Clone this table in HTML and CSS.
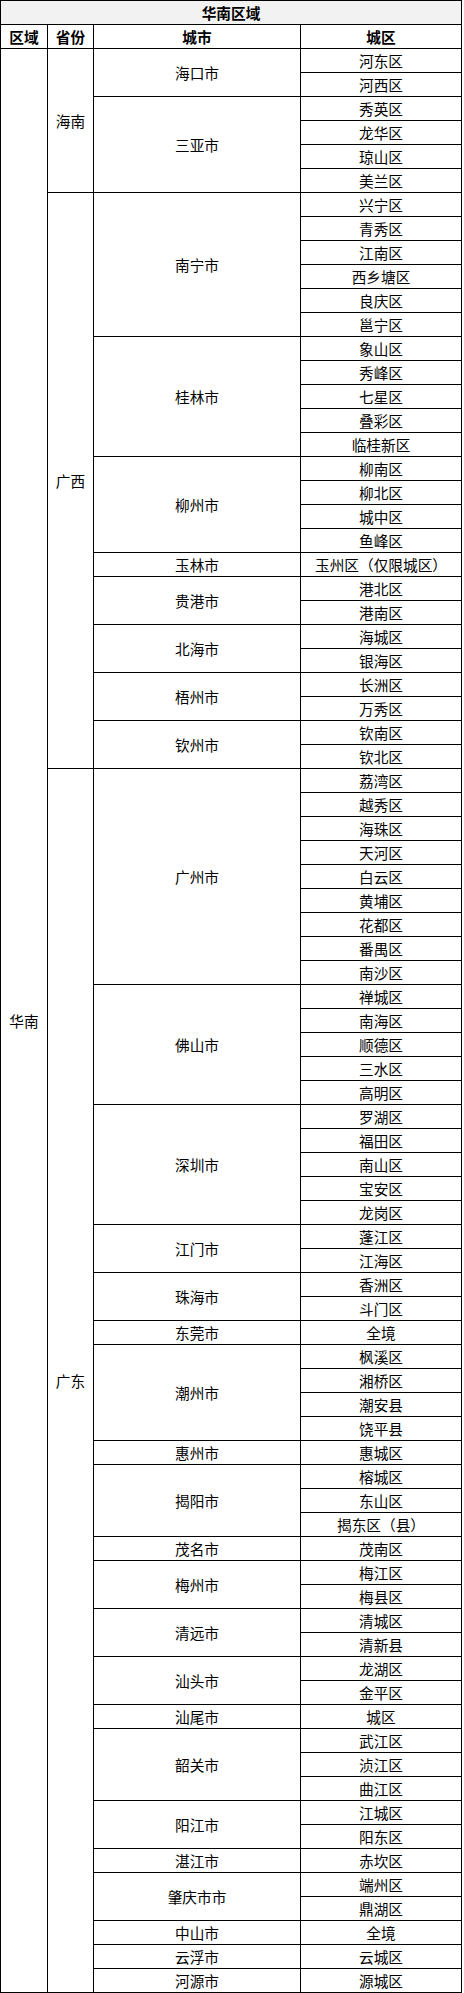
FILE: index.html
```html
<!DOCTYPE html>
<html lang="zh-CN">
<head>
<meta charset="utf-8">
<title>华南区域</title>
<link rel="stylesheet" href="styles.css">
</head>
<body>
<table class="region-table">
<colgroup><col class="c-region"><col class="c-prov"><col class="c-city"><col class="c-dist"></colgroup>
<thead>
<tr><th colspan="4" class="title">华南区域</th></tr>
<tr><th>区域</th><th>省份</th><th>城市</th><th>城区</th></tr>
</thead>
<tbody>
<tr><td rowspan="81">华南</td><td rowspan="6">海南</td><td rowspan="2">海口市</td><td>河东区</td></tr>
<tr><td>河西区</td></tr>
<tr><td rowspan="4">三亚市</td><td>秀英区</td></tr>
<tr><td>龙华区</td></tr>
<tr><td>琼山区</td></tr>
<tr><td>美兰区</td></tr>
<tr><td rowspan="24">广西</td><td rowspan="6">南宁市</td><td>兴宁区</td></tr>
<tr><td>青秀区</td></tr>
<tr><td>江南区</td></tr>
<tr><td>西乡塘区</td></tr>
<tr><td>良庆区</td></tr>
<tr><td>邕宁区</td></tr>
<tr><td rowspan="5">桂林市</td><td>象山区</td></tr>
<tr><td>秀峰区</td></tr>
<tr><td>七星区</td></tr>
<tr><td>叠彩区</td></tr>
<tr><td>临桂新区</td></tr>
<tr><td rowspan="4">柳州市</td><td>柳南区</td></tr>
<tr><td>柳北区</td></tr>
<tr><td>城中区</td></tr>
<tr><td>鱼峰区</td></tr>
<tr><td>玉林市</td><td>玉州区（仅限城区）</td></tr>
<tr><td rowspan="2">贵港市</td><td>港北区</td></tr>
<tr><td>港南区</td></tr>
<tr><td rowspan="2">北海市</td><td>海城区</td></tr>
<tr><td>银海区</td></tr>
<tr><td rowspan="2">梧州市</td><td>长洲区</td></tr>
<tr><td>万秀区</td></tr>
<tr><td rowspan="2">钦州市</td><td>钦南区</td></tr>
<tr><td>钦北区</td></tr>
<tr><td rowspan="51">广东</td><td rowspan="9">广州市</td><td>荔湾区</td></tr>
<tr><td>越秀区</td></tr>
<tr><td>海珠区</td></tr>
<tr><td>天河区</td></tr>
<tr><td>白云区</td></tr>
<tr><td>黄埔区</td></tr>
<tr><td>花都区</td></tr>
<tr><td>番禺区</td></tr>
<tr><td>南沙区</td></tr>
<tr><td rowspan="5">佛山市</td><td>禅城区</td></tr>
<tr><td>南海区</td></tr>
<tr><td>顺德区</td></tr>
<tr><td>三水区</td></tr>
<tr><td>高明区</td></tr>
<tr><td rowspan="5">深圳市</td><td>罗湖区</td></tr>
<tr><td>福田区</td></tr>
<tr><td>南山区</td></tr>
<tr><td>宝安区</td></tr>
<tr><td>龙岗区</td></tr>
<tr><td rowspan="2">江门市</td><td>蓬江区</td></tr>
<tr><td>江海区</td></tr>
<tr><td rowspan="2">珠海市</td><td>香洲区</td></tr>
<tr><td>斗门区</td></tr>
<tr><td>东莞市</td><td>全境</td></tr>
<tr><td rowspan="4">潮州市</td><td>枫溪区</td></tr>
<tr><td>湘桥区</td></tr>
<tr><td>潮安县</td></tr>
<tr><td>饶平县</td></tr>
<tr><td>惠州市</td><td>惠城区</td></tr>
<tr><td rowspan="3">揭阳市</td><td>榕城区</td></tr>
<tr><td>东山区</td></tr>
<tr><td>揭东区（县）</td></tr>
<tr><td>茂名市</td><td>茂南区</td></tr>
<tr><td rowspan="2">梅州市</td><td>梅江区</td></tr>
<tr><td>梅县区</td></tr>
<tr><td rowspan="2">清远市</td><td>清城区</td></tr>
<tr><td>清新县</td></tr>
<tr><td rowspan="2">汕头市</td><td>龙湖区</td></tr>
<tr><td>金平区</td></tr>
<tr><td>汕尾市</td><td>城区</td></tr>
<tr><td rowspan="3">韶关市</td><td>武江区</td></tr>
<tr><td>浈江区</td></tr>
<tr><td>曲江区</td></tr>
<tr><td rowspan="2">阳江市</td><td>江城区</td></tr>
<tr><td>阳东区</td></tr>
<tr><td>湛江市</td><td>赤坎区</td></tr>
<tr><td rowspan="2">肇庆市市</td><td>端州区</td></tr>
<tr><td>鼎湖区</td></tr>
<tr><td>中山市</td><td>全境</td></tr>
<tr><td>云浮市</td><td>云城区</td></tr>
<tr><td>河源市</td><td>源城区</td></tr>
</tbody>
</table>
</body>
</html>
```
FILE: styles.css
```css
html, body {
  margin: 0;
  padding: 0;
  background: #ffffff;
}
.region-table {
  border-collapse: collapse;
  table-layout: fixed;
  width: 462px;
  font-family: "Noto Sans CJK SC", "Noto Sans", sans-serif;
  font-size: 14.67px;
  color: #000000;
}
.c-region { width: 47px; }
.c-prov { width: 46px; }
.c-city { width: 207px; }
.c-dist { width: 161px; }
.region-table th,
.region-table td {
  border: 1px solid #000000;
  height: 24px;
  padding: 0;
  line-height: 20px;
  text-align: center;
  vertical-align: middle;
  white-space: nowrap;
  box-sizing: border-box;
}
.region-table th {
  font-weight: bold;
}
.region-table th.title {
  background: #f2f2f2;
}
```
